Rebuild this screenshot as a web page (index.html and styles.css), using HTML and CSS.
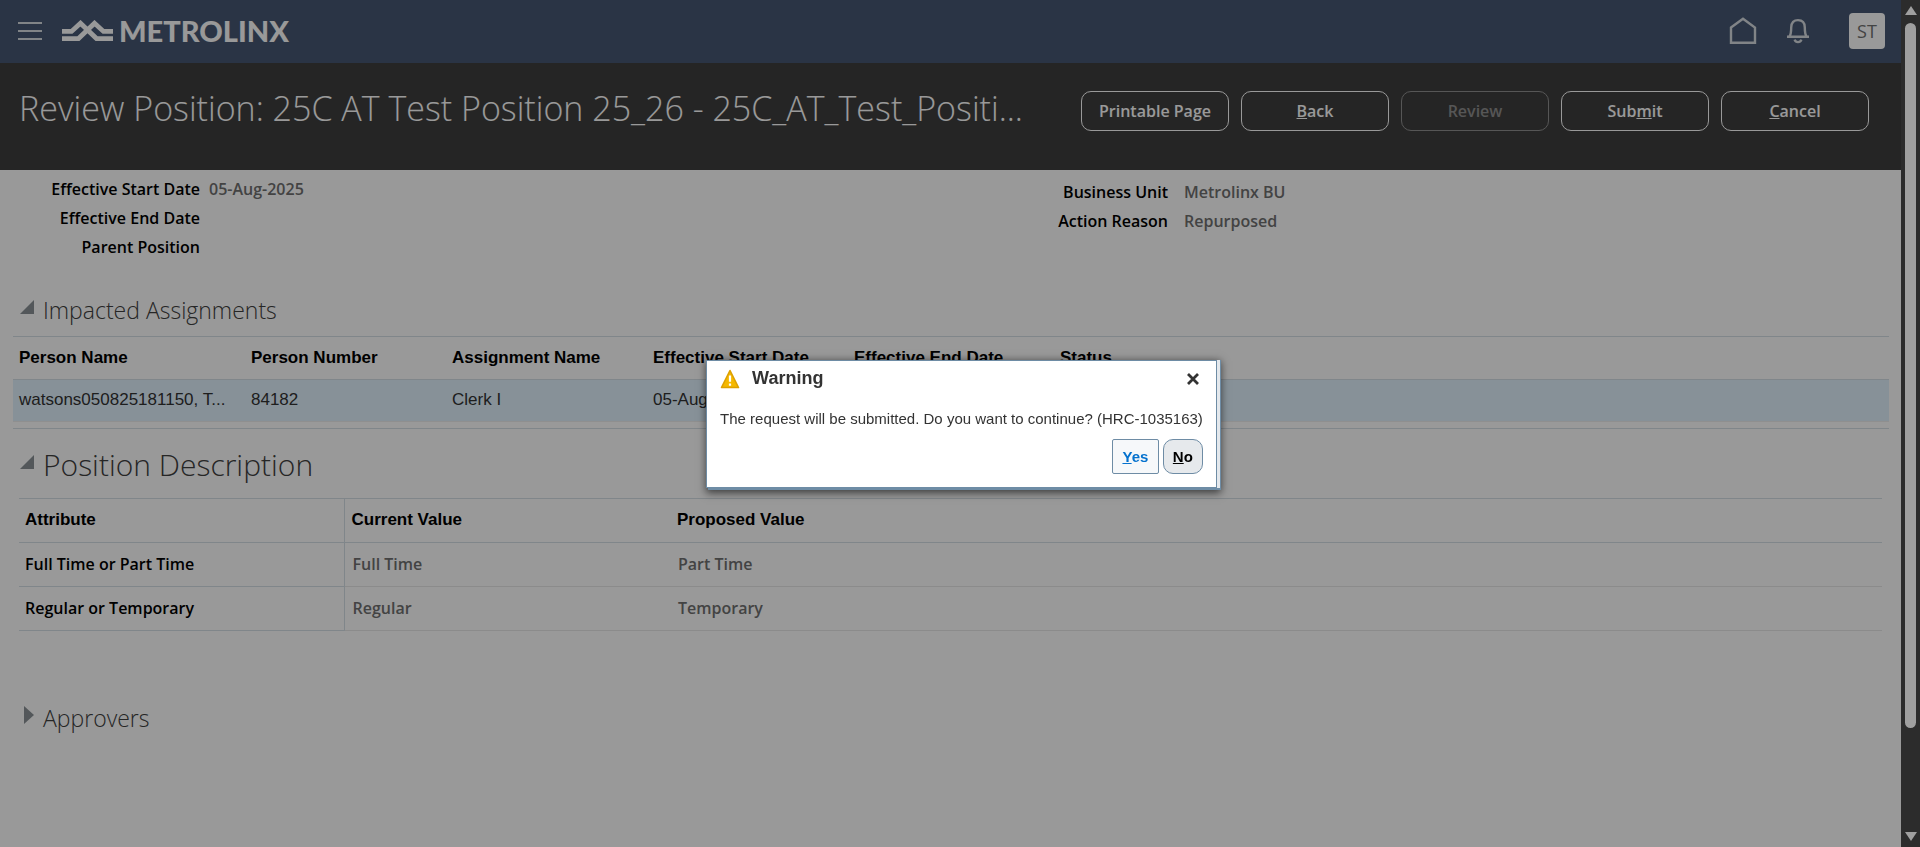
FILE: index.html
```html
<!DOCTYPE html>
<html lang="en">
<head>
<meta charset="utf-8">
<title>Review Position</title>
<link rel="stylesheet" href="styles.css">
</head>
<body>
<div class="app">
  <div class="page">
    <header class="topbar">
      <button class="icon-btn" aria-label="Navigator">
        <svg width="24" height="24" viewBox="0 0 24 24" fill="none" stroke="currentColor" stroke-width="2"><path d="M0 4h24M0 12h24M0 20h24"/></svg>
      </button>
      <a class="logo" href="#">
        <svg width="51" height="22" viewBox="0 0 51 22" fill="none" stroke="currentColor" stroke-width="4.8"><path d="M0 11.400h9.500L18.500 3.200 34.500 18.600H51"/><path d="M0 18.600h16.500L32.500 3.200l9 8.200H51"/></svg>
        <span>METROLINX</span>
      </a>
      <nav class="tools">
        <button class="icon-btn" aria-label="Home">
          <svg width="28" height="28" viewBox="0 0 28 28" fill="none" stroke="currentColor" stroke-width="2.400"><path d="M2 10.500 14 1.800l12 8.700V25.800H2z"/></svg>
        </button>
        <button class="icon-btn" aria-label="Notifications">
          <svg width="24" height="26" viewBox="0 0 24 26" fill="none" stroke="currentColor" stroke-width="2.400"><path d="M1 18.700h22M3.400 18.500C5 16.500 5.200 14 5.200 9.500 5.200 4.500 8 2.100 12 2.100s6.800 2.400 6.800 7.400c0 4.500.2 7 1.800 9"/><path d="M8.600 21.600c.6 1.700 1.800 2.500 3.400 2.500s2.800-.8 3.400-2.500"/></svg>
        </button>
        <button class="avatar">ST</button>
      </nav>
    </header>

    <div class="titlebar">
      <h1>Review Position: 25C AT Test Position 25_26 - 25C_AT_Test_Positi...</h1>
      <div class="actions">
        <button>Printable Page</button>
        <button><u>B</u>ack</button>
        <button disabled>Review</button>
        <button>Sub<u>m</u>it</button>
        <button><u>C</u>ancel</button>
      </div>
    </div>

    <main class="content">
      <div class="summary">
        <dl class="fields">
          <dt>Effective Start Date</dt><dd>05-Aug-2025</dd>
          <dt>Effective End Date</dt><dd></dd>
          <dt>Parent Position</dt><dd></dd>
        </dl>
        <dl class="fields fields-right">
          <dt>Business Unit</dt><dd>Metrolinx BU</dd>
          <dt>Action Reason</dt><dd>Repurposed</dd>
        </dl>
      </div>

      <section class="assignments">
        <h2><button class="toggle" aria-expanded="true" aria-label="Collapse Impacted Assignments"><svg width="14" height="14" viewBox="0 0 14 14"><path d="M14 0v14H0z"/></svg></button>Impacted Assignments</h2>
        <div class="table-frame">
          <table>
            <colgroup><col class="c-name"><col class="c-mid"><col class="c-mid"><col class="c-mid"><col class="c-end"><col></colgroup>
            <thead><tr><th>Person Name</th><th>Person Number</th><th>Assignment Name</th><th>Effective Start Date</th><th>Effective End Date</th><th>Status</th></tr></thead>
            <tbody><tr><td>watsons050825181150, T...</td><td>84182</td><td>Clerk I</td><td>05-Aug-2025</td><td></td><td></td></tr></tbody>
          </table>
        </div>
      </section>

      <section class="description">
        <h2 class="large"><button class="toggle" aria-expanded="true" aria-label="Collapse Position Description"><svg width="14" height="14" viewBox="0 0 14 14"><path d="M14 0v14H0z"/></svg></button>Position Description</h2>
        <table>
          <colgroup><col class="c-attr"><col class="c-value"><col></colgroup>
          <thead><tr><th>Attribute</th><th>Current Value</th><th>Proposed Value</th></tr></thead>
          <tbody>
            <tr><th scope="row">Full Time or Part Time</th><td>Full Time</td><td>Part Time</td></tr>
            <tr><th scope="row">Regular or Temporary</th><td>Regular</td><td>Temporary</td></tr>
          </tbody>
        </table>
      </section>

      <section class="approvers">
        <h2><button class="toggle" aria-expanded="false" aria-label="Expand Approvers"><svg width="14" height="18" viewBox="0 0 14 18"><path d="M4 0l10 9L4 18z"/></svg></button>Approvers</h2>
      </section>
    </main>
  </div>

  <div class="scrollbar" aria-hidden="true">
    <svg width="14" height="11" viewBox="0 0 14 11"><path d="M7 1l6 9H1z"/></svg>
    <div class="track"><div class="thumb"></div></div>
    <svg width="14" height="11" viewBox="0 0 14 11"><path d="M7 10l6-9H1z"/></svg>
  </div>
</div>

<div class="modal-layer">
  <div class="dialog" role="alertdialog" aria-labelledby="dlg-title" aria-describedby="dlg-text">
    <div class="dialog-head">
      <svg width="20" height="20" viewBox="0 0 20 20"><path d="M10 1.500 18.500 18.500h-17z" fill="#f5b800" stroke="#dda000" stroke-width="1.600" stroke-linejoin="round"/><path d="M10 6.500v6.200M10 14.600v2.200" stroke="#fff" stroke-width="2.200"/></svg>
      <h3 id="dlg-title">Warning</h3>
      <button class="close" aria-label="Close"><svg width="14" height="14" viewBox="0 0 14 14" fill="none" stroke="currentColor" stroke-width="2.800"><path d="M2 2l10 10M12 2 2 12"/></svg></button>
    </div>
    <p id="dlg-text">The request will be submitted. Do you want to continue? (HRC-1035163)</p>
    <div class="dialog-actions">
      <button class="yes"><u>Y</u>es</button>
      <button class="no"><u>N</u>o</button>
    </div>
  </div>
</div>
</body>
</html>
```
FILE: styles.css
```css
* { box-sizing: border-box; }

body {
  margin: 0;
  font-family: "Open Sans", "Noto Sans", sans-serif;
  font-size: 16px;
  color: #000;
}

button { font: inherit; color: inherit; cursor: pointer; }
h1, h2, h3, p, dl, dd { margin: 0; }

.app { display: flex; min-height: 100vh; background: #fff; }
.page { position: relative; flex: 1; min-width: 0; }

/* Dims the page while the dialog is open */
.page::after {
  content: "";
  position: absolute;
  inset: 0;
  background: rgba(0, 0, 0, 0.4);
}

.topbar {
  display: flex;
  align-items: center;
  height: 63px;
  padding: 0 16px 2px 18px;
  background: #465873;
  color: #d8dce2;
}
.icon-btn { display: flex; padding: 0; border: 0; background: none; }
.logo {
  display: flex;
  align-items: center;
  gap: 6px;
  margin-left: 20px;
  color: #fff;
  font: 900 29px/32px Lato, sans-serif;
  text-decoration: none;
}
.tools { display: flex; align-items: center; gap: 29px; margin-left: auto; }
.avatar {
  width: 36px;
  height: 36px;
  margin-left: 10px;
  padding: 0;
  border: 0;
  border-radius: 4px;
  background: #fff;
  color: #707070;
  font-size: 18px;
}

.titlebar {
  display: flex;
  justify-content: space-between;
  gap: 24px;
  height: 107px;
  padding: 20px 32px 0 19px;
  background: #3f3f3f;
  color: #fff;
}
.titlebar h1 {
  min-width: 0;
  font-size: 34px;
  font-weight: 300;
  line-height: 50px;
  white-space: nowrap;
}
.actions { display: flex; gap: 12px; padding-top: 8px; }
.actions button {
  width: 148px;
  height: 40px;
  padding: 0;
  border: 1px solid #fff;
  border-radius: 10px;
  background: none;
  font-weight: 600;
  white-space: nowrap;
}
.actions button:disabled { border-color: #909090; color: #909090; }

.summary { display: flex; padding: 4px 0 0 13px; }
.fields {
  display: grid;
  flex: 1;
  grid-template-columns: 187px 1fr;
  grid-auto-rows: 29px;
  align-content: start;
  align-items: center;
  column-gap: 9px;
}
.fields dt { font-weight: 600; text-align: right; }
.fields dd { color: #707070; font-weight: 600; }
.fields-right { grid-template-columns: 211px 1fr; column-gap: 16px; padding-top: 3px; }

h2 {
  display: flex;
  align-items: center;
  color: #404040;
  font-size: 23px;
  font-weight: 300;
  line-height: 36px;
}
h2.large { font-size: 30px; line-height: 46px; }
.toggle {
  display: flex;
  margin: 0 9px 6px 0;
  padding: 0;
  border: 0;
  background: none;
  fill: #8a9196;
}

table { width: 100%; border-collapse: collapse; table-layout: fixed; }
th, td { overflow: hidden; padding: 0 6px; text-align: left; white-space: nowrap; }
thead th { font-family: "Liberation Sans", Arial, sans-serif; font-size: 17px; }

.assignments { padding: 31px 12px 0 13px; }
.assignments h2 { padding-left: 7px; }
.table-frame {
  margin-top: 8px;
  padding-bottom: 6px;
  border-top: 1px solid #d6dfe6;
  border-bottom: 1px solid #d6dfe6;
}
.table-frame th { height: 42px; }
.table-frame td {
  height: 42px;
  border-top: 1px solid #d6dfe6;
  border-bottom: 1px solid #eee;
  background: #e1f2fe;
  color: #333;
  font-family: "Liberation Sans", Arial, sans-serif;
  font-size: 17px;
}
.c-name { width: 232px; }
.c-mid { width: 201px; }
.c-end { width: 206px; }

.description { padding: 13px 19px 0; }
.description h2 { padding-left: 1px; }
.description table {
  margin-top: 10px;
  border-top: 1px solid #d6dfe6;
  border-bottom: 1px solid #d6dfe6;
}
.description th, .description td { height: 44px; border-bottom: 1px solid #d6dfe6; }
.description td { padding-left: 8px; border-bottom-color: #e8e8e8; color: #707070; font-weight: 600; }
.description thead th + th { padding-left: 7px; }
.description th:first-child { border-right: 1px solid #d6dfe6; }
.description tbody th { font-weight: 600; }
.c-attr { width: 325px; }
.c-value { width: 326px; }

.approvers { padding: 69px 20px 0; }

.scrollbar {
  display: flex;
  flex-direction: column;
  align-items: center;
  width: 19px;
  padding: 5px 0;
  background: #2c2c2c;
  fill: #9f9f9f;
}
.track { flex: 1; padding: 7px 0; }
.thumb { width: 11px; height: 88%; border-radius: 6px; background: #9f9f9f; }

.modal-layer {
  position: fixed;
  inset: 0;
  display: flex;
  align-items: center;
  justify-content: center;
  padding-left: 3px;
}
.dialog {
  padding: 8px 13px 13px;
  border: 1px solid #6e8ca5;
  background: #fff;
  box-shadow: 3px 0 0 #e4e8ec, 3px 1px 0 1px #6e8ca5, 2px 3px 8px 2px rgba(0, 0, 0, 0.6);
  color: #333;
  font-family: "Liberation Sans", Arial, sans-serif;
  font-size: 15px;
}
.dialog-head { display: flex; align-items: center; gap: 12px; height: 20px; }
.dialog-head h3 { flex: 1; font-size: 18px; }
.close { display: flex; padding: 0 3px; border: 0; background: none; }
.dialog p { margin-top: 20px; line-height: 20px; white-space: nowrap; }
.dialog-actions { display: flex; justify-content: flex-end; gap: 4px; margin-top: 10px; }
.dialog-actions button { height: 35px; padding: 0; border: 1px solid #6e8ca5; font-weight: 700; }
.dialog-actions .yes { width: 47px; border-radius: 2px; background: #f6f8fa; color: #0572ce; }
.dialog-actions .no { width: 40px; border-radius: 10px; background: #e6e9ec; color: #000; }
```
